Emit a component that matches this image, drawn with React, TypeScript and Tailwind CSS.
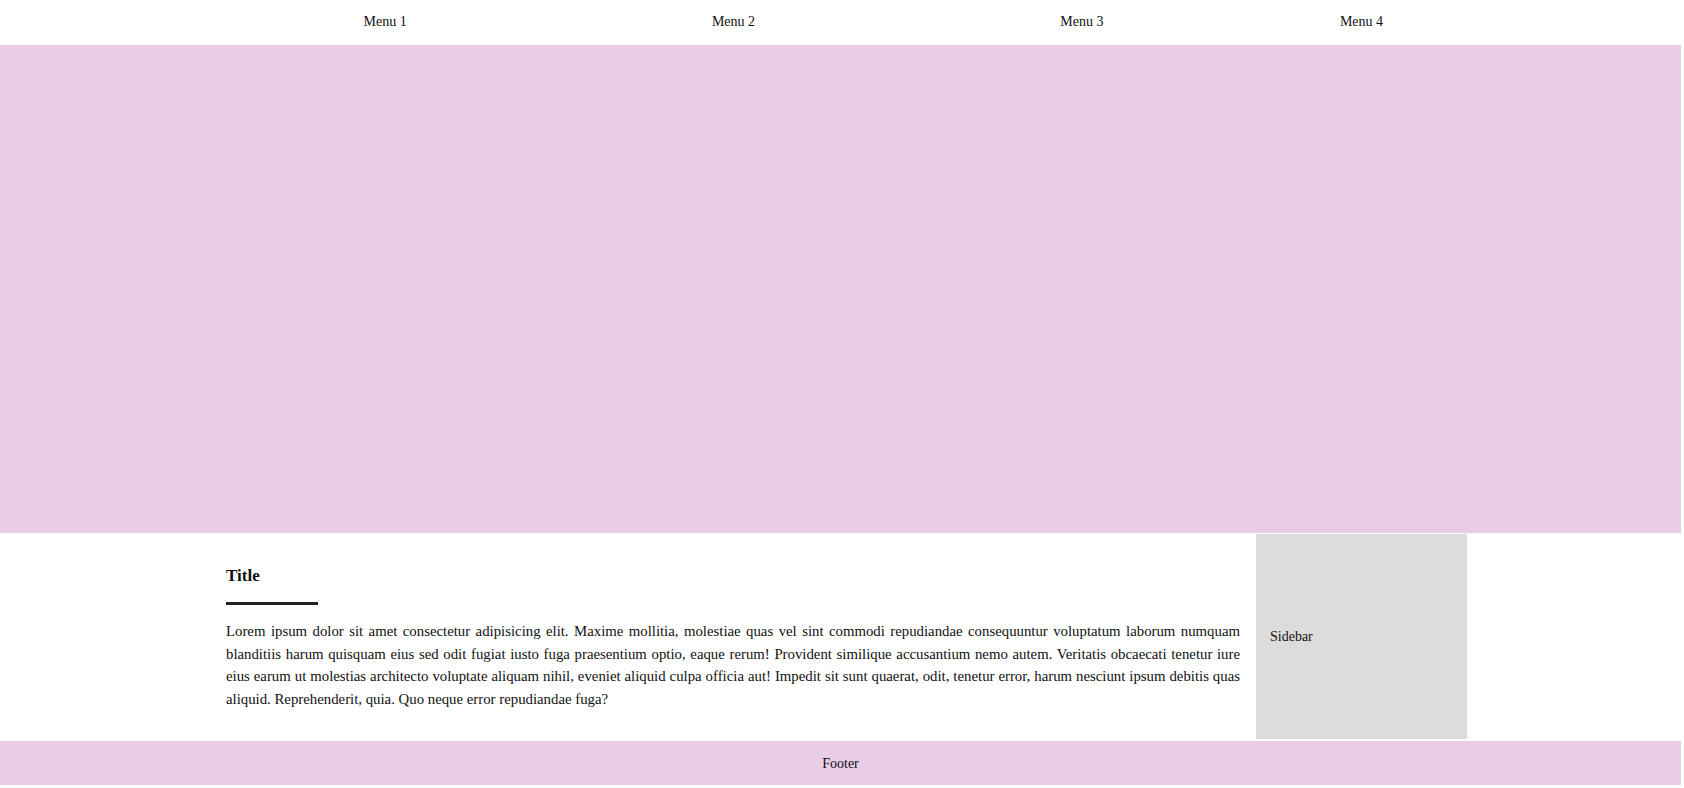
import React from "react";

export default function App() {
  return (
    <div className="w-[1681px] bg-white text-[14px] text-[#111] font-['Liberation_Serif',serif]">
      <header className="h-[45px]">
        <nav className="ml-[211px] grid w-[1256px] grid-cols-[1045px_211px] pt-[13px]">
          <div className="grid grid-cols-3">
            <span className="text-center leading-[18px]">Menu 1</span>
            <span className="text-center leading-[18px]">Menu 2</span>
            <span className="text-center leading-[18px]">Menu 3</span>
          </div>
          <span className="text-center leading-[18px]">Menu 4</span>
        </nav>
      </header>
      <section className="h-[488px] bg-[#e8cce8]" />
      <main className="ml-[211px] mt-[1px] grid w-[1256px] grid-cols-[1045px_211px]">
        <article className="pl-[15px] pr-[16px] pt-[31px] pb-[16px]">
          <h3 className="text-[17px] font-bold leading-[22px]">Title</h3>
          <div className="mt-[15px] h-[3px] w-[92px] bg-[#222]" />
          <p className="mt-[15px] text-justify text-[14.8px] leading-[22.6px]">
            Lorem ipsum dolor sit amet consectetur adipisicing elit. Maxime mollitia, molestiae quas vel sint commodi repudiandae consequuntur voluptatum laborum numquam blanditiis harum quisquam eius sed odit fugiat iusto fuga praesentium optio, eaque rerum! Provident similique accusantium nemo autem. Veritatis obcaecati tenetur iure eius earum ut molestias architecto voluptate aliquam nihil, eveniet aliquid culpa officia aut! Impedit sit sunt quaerat, odit, tenetur error, harum nesciunt ipsum debitis quas aliquid. Reprehenderit, quia. Quo neque error repudiandae fuga?
          </p>
        </article>
        <aside className="flex h-[205px] items-center bg-[#dcdcdc] px-[14px]">
          <span>Sidebar</span>
        </aside>
      </main>
      <footer className="mt-[2px] flex h-[44px] items-center justify-center bg-[#e8cce8]">
        Footer
      </footer>
    </div>
  );
}
